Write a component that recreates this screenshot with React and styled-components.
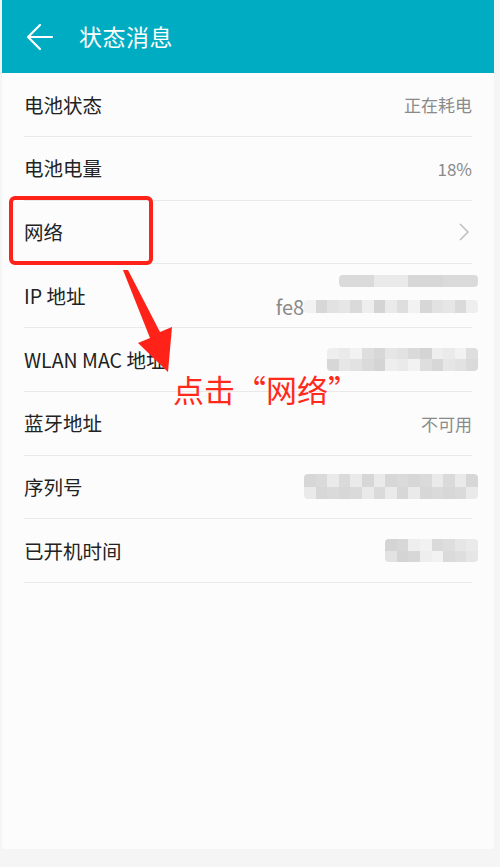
import styled, { createGlobalStyle } from "styled-components";

const GlobalStyle = createGlobalStyle`
  html, body {
    margin: 0;
    padding: 0;
    background: #f5f5f5;
  }
  body {
    font-family: "Noto Sans CJK SC", "Noto Sans", sans-serif;
  }
`;

const Page = styled.div`
  width: 500px;
  height: 867px;
  background: #f5f5f5;
  overflow: hidden;
`;

const Screen = styled.div`
  position: relative;
  width: 492px;
  height: 849px;
  margin-left: 2px;
  background: #fcfcfc;
`;

const Header = styled.div`
  height: 73px;
  background: #00acc2;
  display: flex;
  align-items: center;
  padding-left: 24px;
  gap: 25px;
  box-sizing: border-box;
`;

const Title = styled.div`
  color: #fff;
  font-size: 23px;
  font-weight: 400;
  letter-spacing: 0.5px;
  line-height: 1;
`;

const List = styled.div`
  display: flex;
  flex-direction: column;
  padding: 0 22px 0 22px;
`;

const Row = styled.div`
  height: 63.75px;
  box-sizing: border-box;
  display: flex;
  align-items: center;
  justify-content: space-between;
  border-bottom: 1px solid #e9e9e9;
`;

const Label = styled.div`
  color: #222;
  font-size: 19.5px;
  line-height: 1;
`;

const Value = styled.div`
  color: #8a8a8a;
  font-size: 17px;
  line-height: 1;
  display: flex;
  align-items: center;
`;

const ValueStack = styled.div`
  display: flex;
  flex-direction: column;
  align-items: flex-end;
  gap: 10px;
  margin-right: -6px;
`;

const ValueLine = styled.div`
  display: flex;
  align-items: center;
  color: #8a8a8a;
  font-size: 20px;
  line-height: 1;
`;

const Mosaic = styled.div`
  display: grid;
  grid-template-columns: repeat(${(p) => p.$cols}, ${(p) => p.$cell}px);
  grid-auto-rows: ${(p) => p.$rowH}px;
  border-radius: 4px;
  overflow: hidden;
  margin-right: ${(p) => p.$shift || 0}px;
`;

const Cell = styled.div`
  background: ${(p) => p.$c};
`;

const Chevron = styled.svg`
  width: 12px;
  height: 20px;
  margin-right: 2px;
`;

const Overlay = styled.div`
  position: absolute;
  inset: 0;
  pointer-events: none;
`;

const RedBox = styled.div`
  position: absolute;
  left: 7px;
  top: 196px;
  width: 136px;
  height: 61px;
  border: 4px solid #ff2219;
  border-radius: 6px;
`;

const ArrowSvg = styled.svg`
  position: absolute;
  left: 0;
  top: 0;
`;

const Note = styled.div`
  position: absolute;
  left: 171px;
  top: 372px;
  color: #ff2a1b;
  font-size: 31px;
  line-height: 1.1;
  white-space: nowrap;
`;

const grays = ["#e6e6e6", "#dadada", "#eeeeee", "#d4d4d4", "#eaeaea", "#dedede", "#f2f2f2", "#d7d7d7", "#e2e2e2"];

function Pixelated({ cols, rows, cell = 12, rowH = 12, seed = 1, shift }) {
  const cells = [];
  for (let i = 0; i < cols * rows; i++) {
    cells.push(<Cell key={i} $c={grays[(i * 7 + seed * 5 + (i % 3) * seed) % grays.length]} />);
  }
  return (
    <Mosaic $cols={cols} $cell={cell} $rowH={rowH} $shift={shift}>
      {cells}
    </Mosaic>
  );
}

const rows = [
  { label: "电池状态", value: <Value>正在耗电</Value> },
  { label: "电池电量", value: <Value>18%</Value> },
  {
    label: "网络",
    value: (
      <Chevron viewBox="0 0 12 20">
        <path d="M2 2 L10 10 L2 18" fill="none" stroke="#bdbdbd" strokeWidth="1.5" />
      </Chevron>
    ),
  },
  {
    label: "IP 地址",
    value: (
      <ValueStack>
        <Pixelated cols={12} rows={1} cell={11.6} rowH={12} seed={2} />
        <ValueLine>
          fe8
          <Pixelated cols={15} rows={1} cell={11.6} rowH={13} seed={3} />
        </ValueLine>
      </ValueStack>
    ),
  },
  {
    label: "WLAN MAC 地址",
    value: <Pixelated cols={13} rows={2} cell={11.6} rowH={11.5} seed={4} shift={-6} />,
  },
  { label: "蓝牙地址", value: <Value>不可用</Value> },
  {
    label: "序列号",
    value: <Pixelated cols={15} rows={2} cell={11.6} rowH={12.5} seed={5} shift={-6} />,
  },
  {
    label: "已开机时间",
    value: <Pixelated cols={8} rows={2} cell={11.6} rowH={11.5} seed={6} shift={-6} />,
  },
];

export default function App() {
  return (
    <Page>
      <GlobalStyle />
      <Screen>
        <Header>
          <svg width="28" height="28" viewBox="0 0 28 28">
            <path d="M2 14 H26 M14 2 L2 14 L14 26" fill="none" stroke="#fff" strokeWidth="2.2" strokeLinecap="round" strokeLinejoin="round" />
          </svg>
          <Title>状态消息</Title>
        </Header>
        <List>
          {rows.map((r) => (
            <Row key={r.label}>
              <Label>{r.label}</Label>
              {r.value}
            </Row>
          ))}
        </List>
        <Overlay>
          <RedBox />
          <ArrowSvg width="492" height="849" viewBox="0 0 492 849">
            <polygon points="121,270 126,270 158,332 170,327 166,372 136,343 148,338" fill="#ff2219" />
          </ArrowSvg>
          <Note>点击“网络”</Note>
        </Overlay>
      </Screen>
    </Page>
  );
}
